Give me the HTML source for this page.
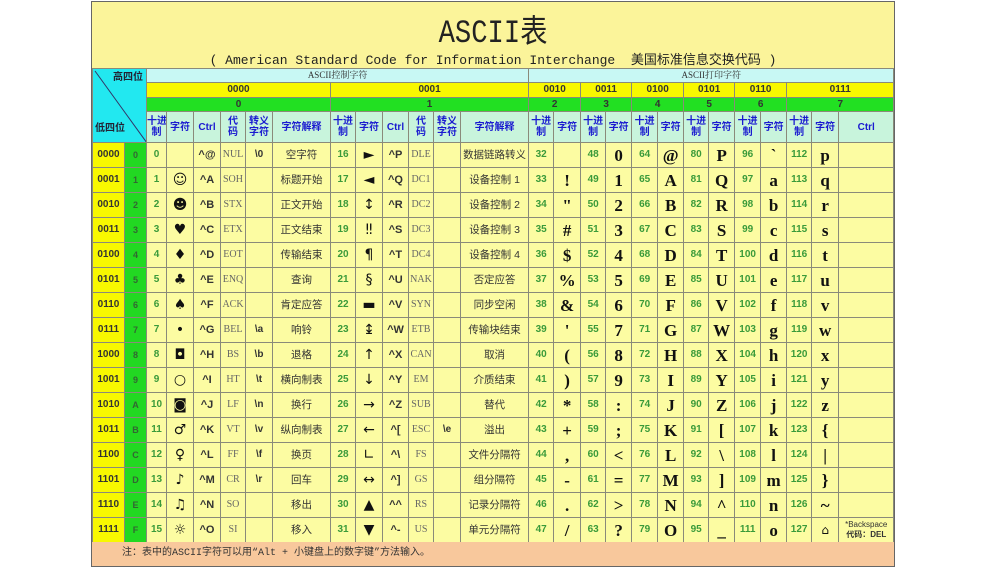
<!DOCTYPE html>
<html><head><meta charset="utf-8"><style>
body{margin:0;background:#fff;width:982px;height:569px;overflow:hidden;font-family:"Liberation Sans","Noto Sans CJK SC",sans-serif}
#box{position:absolute;left:91px;top:1px;width:802px;height:564px;border:1px solid #666;background:#fbf49a;overflow:hidden}
#title{position:absolute;left:0;top:4px;width:802px;text-align:center;font-family:"Liberation Mono","Noto Sans CJK SC",monospace;font-size:32px;color:#222;transform:scaleX(.85)}
#sub{position:absolute;left:0;top:47px;width:802px;text-align:center;font-family:"Liberation Mono","Noto Sans CJK SC",monospace;font-size:13px;color:#222}
table{position:absolute;left:0;top:66px;border-collapse:collapse;table-layout:fixed;width:802px}
td{border:1px solid #8a8a7a;padding:0;text-align:center;overflow:hidden;white-space:nowrap;background:#fcfca2;font-size:11px;color:#444;line-height:1}
tr.r td{height:24px;max-height:24px}
.cy{background:#c8f8f4;font-size:9px;color:#333;font-family:"Liberation Serif","Noto Serif CJK SC",serif;height:13px}
.ye{background:#f8f800;font-size:10px;font-weight:bold;color:#333;height:14px}
.gr{background:#22e022;font-size:10px;font-weight:bold;color:#333;height:13px}
.hd{background:#c8f4dc;color:#1a1ad0;font-size:10px;font-weight:bold;line-height:11px;height:30px}
.h{background:#f8f800;font-weight:bold;font-size:10px;color:#333}
.g{background:#22d822;font-weight:bold;font-size:9px;color:#336633}
.n{color:#3a9a3a;font-weight:bold;font-size:10px}
.c{font-family:"Liberation Serif","DejaVu Sans",serif;font-weight:bold;font-size:17px;color:#111}
.s{font-family:"DejaVu Sans",sans-serif;font-size:14px;color:#111}
.k{font-weight:bold;font-size:11px;color:#333}
.d{font-family:"Liberation Serif",serif;font-size:10px;color:#666}
.e{font-weight:bold;font-size:10px;color:#333}
.x{font-size:10.5px;color:#333}
#foot{position:absolute;left:0;top:540px;width:802px;height:24px;background:#f8c89c;font-size:10px;color:#333;line-height:23px;font-family:"Liberation Mono","Noto Sans CJK SC",monospace;padding-left:30px;box-sizing:border-box}
</style></head><body>
<div id="box">
<div id="title">ASCII表</div>
<div id="sub">( American Standard Code for Information Interchange &nbsp;美国标准信息交换代码 )</div>
<table>
<colgroup><col style="width:32px"><col style="width:22px"><col style="width:20px"><col style="width:27px"><col style="width:27px"><col style="width:25px"><col style="width:27px"><col style="width:58px"><col style="width:25px"><col style="width:27px"><col style="width:26px"><col style="width:25px"><col style="width:27px"><col style="width:68px"><col style="width:25px"><col style="width:27px"><col style="width:25px"><col style="width:26px"><col style="width:26px"><col style="width:26px"><col style="width:25px"><col style="width:26px"><col style="width:26px"><col style="width:26px"><col style="width:25px"><col style="width:27px"><col style="width:55px"></colgroup>
<tr><td colspan="2" rowspan="4" style="background:#22e8f0;position:relative;height:73px"><svg width="54" height="74" style="position:absolute;left:0;top:0"><line x1="2" y1="2" x2="54" y2="74" stroke="#336" stroke-width="1"/></svg><span style="position:absolute;right:3px;top:4px;font-size:10px;font-weight:bold;color:#223">高四位</span><span style="position:absolute;left:2px;bottom:8px;font-size:10px;font-weight:bold;color:#223">低四位</span></td><td colspan="12" class="cy">ASCII控制字符</td><td colspan="13" class="cy">ASCII打印字符</td></tr>
<tr><td colspan="6" class="ye">0000</td><td colspan="6" class="ye">0001</td><td colspan="2" class="ye">0010</td><td colspan="2" class="ye">0011</td><td colspan="2" class="ye">0100</td><td colspan="2" class="ye">0101</td><td colspan="2" class="ye">0110</td><td colspan="3" class="ye">0111</td></tr>
<tr><td colspan="6" class="gr">0</td><td colspan="6" class="gr">1</td><td colspan="2" class="gr">2</td><td colspan="2" class="gr">3</td><td colspan="2" class="gr">4</td><td colspan="2" class="gr">5</td><td colspan="2" class="gr">6</td><td colspan="3" class="gr">7</td></tr>
<tr><td class="hd">十进<br>制</td><td class="hd">字符</td><td class="hd">Ctrl</td><td class="hd">代<br>码</td><td class="hd">转义<br>字符</td><td class="hd">字符解释</td><td class="hd">十进<br>制</td><td class="hd">字符</td><td class="hd">Ctrl</td><td class="hd">代<br>码</td><td class="hd">转义<br>字符</td><td class="hd">字符解释</td><td class="hd">十进<br>制</td><td class="hd">字符</td><td class="hd">十进<br>制</td><td class="hd">字符</td><td class="hd">十进<br>制</td><td class="hd">字符</td><td class="hd">十进<br>制</td><td class="hd">字符</td><td class="hd">十进<br>制</td><td class="hd">字符</td><td class="hd">十进<br>制</td><td class="hd">字符</td><td class="hd">Ctrl</td></tr>
<tr class="r"><td class="h">0000</td><td class="g">0</td><td class="n">0</td><td class="s"></td><td class="k">^@</td><td class="d">NUL</td><td class="e">\0</td><td class="x">空字符</td><td class="n">16</td><td class="s">►</td><td class="k">^P</td><td class="d">DLE</td><td></td><td class="x">数据链路转义</td><td class="n">32</td><td class="c"></td><td class="n">48</td><td class="c">0</td><td class="n">64</td><td class="c">@</td><td class="n">80</td><td class="c">P</td><td class="n">96</td><td class="c">`</td><td class="n">112</td><td class="c">p</td><td></td></tr>
<tr class="r"><td class="h">0001</td><td class="g">1</td><td class="n">1</td><td class="s">☺</td><td class="k">^A</td><td class="d">SOH</td><td class="e"></td><td class="x">标题开始</td><td class="n">17</td><td class="s">◄</td><td class="k">^Q</td><td class="d">DC1</td><td></td><td class="x">设备控制 1</td><td class="n">33</td><td class="c">!</td><td class="n">49</td><td class="c">1</td><td class="n">65</td><td class="c">A</td><td class="n">81</td><td class="c">Q</td><td class="n">97</td><td class="c">a</td><td class="n">113</td><td class="c">q</td><td></td></tr>
<tr class="r"><td class="h">0010</td><td class="g">2</td><td class="n">2</td><td class="s">☻</td><td class="k">^B</td><td class="d">STX</td><td class="e"></td><td class="x">正文开始</td><td class="n">18</td><td class="s">↕</td><td class="k">^R</td><td class="d">DC2</td><td></td><td class="x">设备控制 2</td><td class="n">34</td><td class="c">"</td><td class="n">50</td><td class="c">2</td><td class="n">66</td><td class="c">B</td><td class="n">82</td><td class="c">R</td><td class="n">98</td><td class="c">b</td><td class="n">114</td><td class="c">r</td><td></td></tr>
<tr class="r"><td class="h">0011</td><td class="g">3</td><td class="n">3</td><td class="s">♥</td><td class="k">^C</td><td class="d">ETX</td><td class="e"></td><td class="x">正文结束</td><td class="n">19</td><td class="s">‼</td><td class="k">^S</td><td class="d">DC3</td><td></td><td class="x">设备控制 3</td><td class="n">35</td><td class="c">#</td><td class="n">51</td><td class="c">3</td><td class="n">67</td><td class="c">C</td><td class="n">83</td><td class="c">S</td><td class="n">99</td><td class="c">c</td><td class="n">115</td><td class="c">s</td><td></td></tr>
<tr class="r"><td class="h">0100</td><td class="g">4</td><td class="n">4</td><td class="s">♦</td><td class="k">^D</td><td class="d">EOT</td><td class="e"></td><td class="x">传输结束</td><td class="n">20</td><td class="s">¶</td><td class="k">^T</td><td class="d">DC4</td><td></td><td class="x">设备控制 4</td><td class="n">36</td><td class="c">$</td><td class="n">52</td><td class="c">4</td><td class="n">68</td><td class="c">D</td><td class="n">84</td><td class="c">T</td><td class="n">100</td><td class="c">d</td><td class="n">116</td><td class="c">t</td><td></td></tr>
<tr class="r"><td class="h">0101</td><td class="g">5</td><td class="n">5</td><td class="s">♣</td><td class="k">^E</td><td class="d">ENQ</td><td class="e"></td><td class="x">查询</td><td class="n">21</td><td class="s">§</td><td class="k">^U</td><td class="d">NAK</td><td></td><td class="x">否定应答</td><td class="n">37</td><td class="c">%</td><td class="n">53</td><td class="c">5</td><td class="n">69</td><td class="c">E</td><td class="n">85</td><td class="c">U</td><td class="n">101</td><td class="c">e</td><td class="n">117</td><td class="c">u</td><td></td></tr>
<tr class="r"><td class="h">0110</td><td class="g">6</td><td class="n">6</td><td class="s">♠</td><td class="k">^F</td><td class="d">ACK</td><td class="e"></td><td class="x">肯定应答</td><td class="n">22</td><td class="s">▬</td><td class="k">^V</td><td class="d">SYN</td><td></td><td class="x">同步空闲</td><td class="n">38</td><td class="c">&amp;</td><td class="n">54</td><td class="c">6</td><td class="n">70</td><td class="c">F</td><td class="n">86</td><td class="c">V</td><td class="n">102</td><td class="c">f</td><td class="n">118</td><td class="c">v</td><td></td></tr>
<tr class="r"><td class="h">0111</td><td class="g">7</td><td class="n">7</td><td class="s">•</td><td class="k">^G</td><td class="d">BEL</td><td class="e">\a</td><td class="x">响铃</td><td class="n">23</td><td class="s">↨</td><td class="k">^W</td><td class="d">ETB</td><td></td><td class="x">传输块结束</td><td class="n">39</td><td class="c">'</td><td class="n">55</td><td class="c">7</td><td class="n">71</td><td class="c">G</td><td class="n">87</td><td class="c">W</td><td class="n">103</td><td class="c">g</td><td class="n">119</td><td class="c">w</td><td></td></tr>
<tr class="r"><td class="h">1000</td><td class="g">8</td><td class="n">8</td><td class="s">◘</td><td class="k">^H</td><td class="d">BS</td><td class="e">\b</td><td class="x">退格</td><td class="n">24</td><td class="s">↑</td><td class="k">^X</td><td class="d">CAN</td><td></td><td class="x">取消</td><td class="n">40</td><td class="c">(</td><td class="n">56</td><td class="c">8</td><td class="n">72</td><td class="c">H</td><td class="n">88</td><td class="c">X</td><td class="n">104</td><td class="c">h</td><td class="n">120</td><td class="c">x</td><td></td></tr>
<tr class="r"><td class="h">1001</td><td class="g">9</td><td class="n">9</td><td class="s">○</td><td class="k">^I</td><td class="d">HT</td><td class="e">\t</td><td class="x">横向制表</td><td class="n">25</td><td class="s">↓</td><td class="k">^Y</td><td class="d">EM</td><td></td><td class="x">介质结束</td><td class="n">41</td><td class="c">)</td><td class="n">57</td><td class="c">9</td><td class="n">73</td><td class="c">I</td><td class="n">89</td><td class="c">Y</td><td class="n">105</td><td class="c">i</td><td class="n">121</td><td class="c">y</td><td></td></tr>
<tr class="r"><td class="h">1010</td><td class="g">A</td><td class="n">10</td><td class="s">◙</td><td class="k">^J</td><td class="d">LF</td><td class="e">\n</td><td class="x">换行</td><td class="n">26</td><td class="s">→</td><td class="k">^Z</td><td class="d">SUB</td><td></td><td class="x">替代</td><td class="n">42</td><td class="c">*</td><td class="n">58</td><td class="c">:</td><td class="n">74</td><td class="c">J</td><td class="n">90</td><td class="c">Z</td><td class="n">106</td><td class="c">j</td><td class="n">122</td><td class="c">z</td><td></td></tr>
<tr class="r"><td class="h">1011</td><td class="g">B</td><td class="n">11</td><td class="s">♂</td><td class="k">^K</td><td class="d">VT</td><td class="e">\v</td><td class="x">纵向制表</td><td class="n">27</td><td class="s">←</td><td class="k">^[</td><td class="d">ESC</td><td class="e">\e</td><td class="x">溢出</td><td class="n">43</td><td class="c">+</td><td class="n">59</td><td class="c">;</td><td class="n">75</td><td class="c">K</td><td class="n">91</td><td class="c">[</td><td class="n">107</td><td class="c">k</td><td class="n">123</td><td class="c">{</td><td></td></tr>
<tr class="r"><td class="h">1100</td><td class="g">C</td><td class="n">12</td><td class="s">♀</td><td class="k">^L</td><td class="d">FF</td><td class="e">\f</td><td class="x">换页</td><td class="n">28</td><td class="s">∟</td><td class="k">^\</td><td class="d">FS</td><td></td><td class="x">文件分隔符</td><td class="n">44</td><td class="c">,</td><td class="n">60</td><td class="c">&lt;</td><td class="n">76</td><td class="c">L</td><td class="n">92</td><td class="c">\</td><td class="n">108</td><td class="c">l</td><td class="n">124</td><td class="c">|</td><td></td></tr>
<tr class="r"><td class="h">1101</td><td class="g">D</td><td class="n">13</td><td class="s">♪</td><td class="k">^M</td><td class="d">CR</td><td class="e">\r</td><td class="x">回车</td><td class="n">29</td><td class="s">↔</td><td class="k">^]</td><td class="d">GS</td><td></td><td class="x">组分隔符</td><td class="n">45</td><td class="c">-</td><td class="n">61</td><td class="c">=</td><td class="n">77</td><td class="c">M</td><td class="n">93</td><td class="c">]</td><td class="n">109</td><td class="c">m</td><td class="n">125</td><td class="c">}</td><td></td></tr>
<tr class="r"><td class="h">1110</td><td class="g">E</td><td class="n">14</td><td class="s">♫</td><td class="k">^N</td><td class="d">SO</td><td class="e"></td><td class="x">移出</td><td class="n">30</td><td class="s">▲</td><td class="k">^^</td><td class="d">RS</td><td></td><td class="x">记录分隔符</td><td class="n">46</td><td class="c">.</td><td class="n">62</td><td class="c">&gt;</td><td class="n">78</td><td class="c">N</td><td class="n">94</td><td class="c">^</td><td class="n">110</td><td class="c">n</td><td class="n">126</td><td class="c">~</td><td></td></tr>
<tr class="r"><td class="h">1111</td><td class="g">F</td><td class="n">15</td><td class="s">☼</td><td class="k">^O</td><td class="d">SI</td><td class="e"></td><td class="x">移入</td><td class="n">31</td><td class="s">▼</td><td class="k">^-</td><td class="d">US</td><td></td><td class="x">单元分隔符</td><td class="n">47</td><td class="c">/</td><td class="n">63</td><td class="c">?</td><td class="n">79</td><td class="c">O</td><td class="n">95</td><td class="c">_</td><td class="n">111</td><td class="c">o</td><td class="n">127</td><td class="s" style="font-size:12px">⌂</td><td style="font-size:8px;line-height:10px;color:#333">*Backspace<br><b>代码：DEL</b></td></tr>
</table>
<div id="foot">注：表中的ASCII字符可以用“Alt + 小键盘上的数字键”方法输入。</div>
</div>
</body></html>
